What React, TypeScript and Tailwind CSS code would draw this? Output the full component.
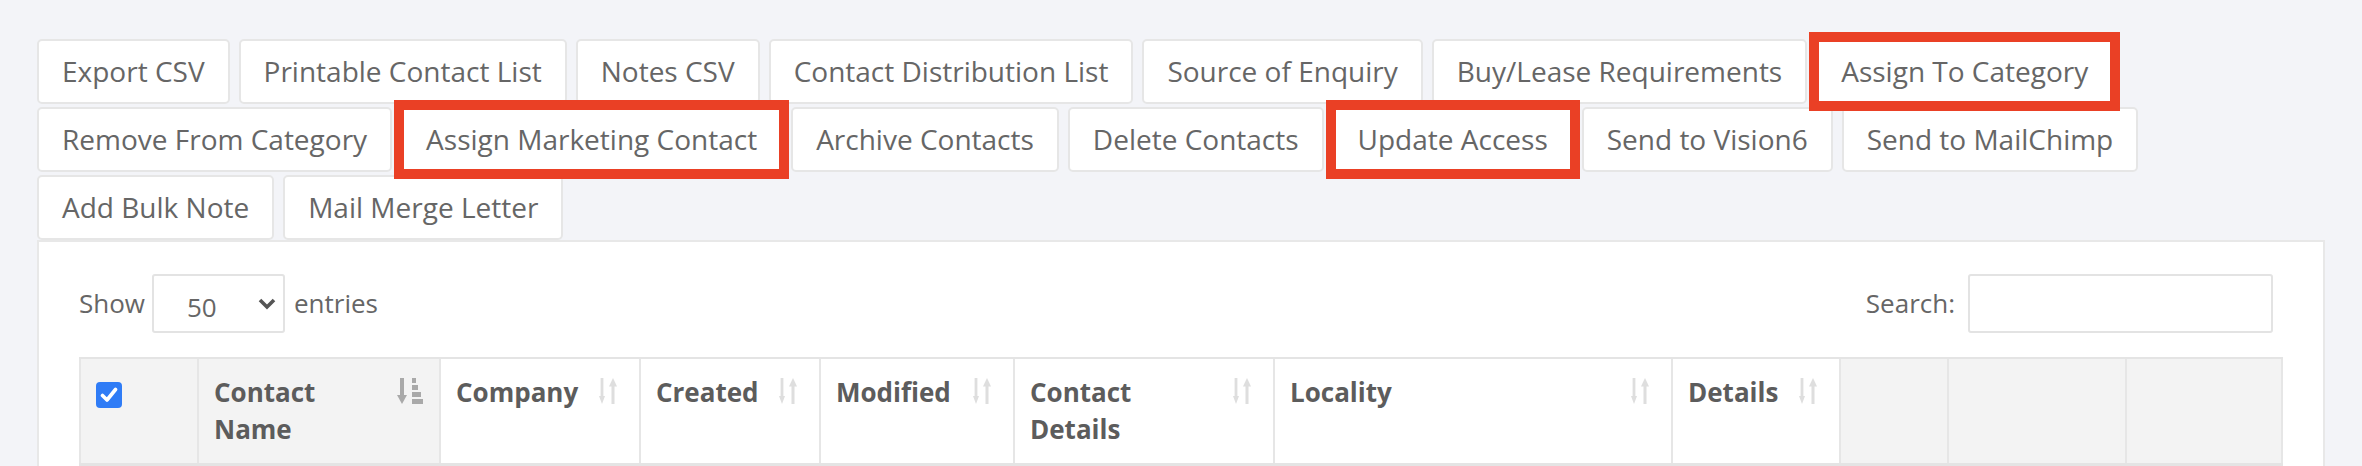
import React from "react";

function Btn({ label, red }: { label: string; red?: boolean }) {
  return (
    <div className="relative h-[65px] shrink-0 whitespace-nowrap rounded-[5px] border-2 border-[#e6e6e6] bg-white px-[23px] text-[28px] leading-[61px] text-[#666]">
      {label}
      {red && (
        <div className="pointer-events-none absolute -inset-[9px] z-10 border-[10px] border-[#ea4025]" />
      )}
    </div>
  );
}

function SortIcon() {
  return (
    <svg width="24" height="26" viewBox="0 0 24 26" className="mt-[4px] shrink-0">
      <rect x="1.6" y="0" width="2.8" height="20" fill="#dedede" />
      <polygon points="0,18 6,18 3,26" fill="#dedede" />
      <rect x="12.5" y="7" width="3" height="19" fill="#dedede" />
      <polygon points="10,8.5 18,8.5 14,0" fill="#dedede" />
    </svg>
  );
}

function SortedIcon() {
  return (
    <svg width="26" height="26" viewBox="0 0 26 26" className="mt-[4px] shrink-0">
      <rect x="3" y="0" width="4" height="19" fill="#a9a9a9" />
      <polygon points="0,17 10,17 5,26" fill="#a9a9a9" />
      <rect x="15" y="0" width="4" height="5" fill="#a9a9a9" />
      <rect x="15" y="7" width="6" height="5" fill="#a9a9a9" />
      <rect x="15" y="14" width="9" height="5" fill="#a9a9a9" />
      <rect x="15" y="21" width="11" height="5" fill="#a9a9a9" />
    </svg>
  );
}

type Col = { lines?: string[]; sort?: "none" | "sorted"; gray?: boolean; check?: boolean };

const cols: Col[] = [
  { check: true, gray: true },
  { lines: ["Contact", "Name"], sort: "sorted", gray: true },
  { lines: ["Company"], sort: "none" },
  { lines: ["Created"], sort: "none" },
  { lines: ["Modified"], sort: "none" },
  { lines: ["Contact", "Details"], sort: "none" },
  { lines: ["Locality"], sort: "none" },
  { lines: ["Details"], sort: "none" },
  { gray: true },
  { gray: true },
  { gray: true },
];

export default function App() {
  const row1 = [
    "Export CSV",
    "Printable Contact List",
    "Notes CSV",
    "Contact Distribution List",
    "Source of Enquiry",
    "Buy/Lease Requirements",
  ];
  const row2a = ["Remove From Category"];
  const row2b = ["Archive Contacts", "Delete Contacts"];
  const row2c = ["Send to Vision6", "Send to MailChimp"];

  return (
    <div className="h-[466px] w-[2362px] overflow-hidden bg-[#f3f4f8] px-[37px] pt-[39px] font-['Open_Sans',sans-serif]">
      <div className="flex flex-col gap-[3px]">
        <div className="flex gap-[9px]">
          {row1.map((l) => (
            <Btn key={l} label={l} />
          ))}
          <Btn label="Assign To Category" red />
        </div>
        <div className="flex gap-[9px]">
          {row2a.map((l) => (
            <Btn key={l} label={l} />
          ))}
          <Btn label="Assign Marketing Contact" red />
          {row2b.map((l) => (
            <Btn key={l} label={l} />
          ))}
          <Btn label="Update Access" red />
          {row2c.map((l) => (
            <Btn key={l} label={l} />
          ))}
        </div>
        <div className="flex gap-[9px]">
          <Btn label="Add Bulk Note" />
          <Btn label="Mail Merge Letter" />
        </div>
      </div>

      <div className="border-2 border-[#e8e8e8] bg-white px-[40px] pt-[32px]">
        <div className="flex h-[59px] items-center justify-between text-[26px] text-[#666]">
          <div className="flex items-center">
            <span>Show</span>
            <div className="ml-[7px] mr-[9px] flex h-[59px] w-[133px] items-center justify-between rounded-[3px] border-2 border-[#e3e3e3] bg-white pl-[33px] pr-[7px]">
              <span className="mt-[6px] leading-none">50</span>
              <svg width="18" height="12" viewBox="0 0 18 12">
                <polyline points="2,2 9,9 16,2" fill="none" stroke="#555" strokeWidth="3.6" />
              </svg>
            </div>
            <span>entries</span>
          </div>
          <div className="mr-[10px] flex items-center">
            <span>Search:</span>
            <div className="ml-[13px] h-[59px] w-[305px] rounded-[3px] border-2 border-[#e3e3e3] bg-white" />
          </div>
        </div>

        <div className="mt-[24px] grid grid-cols-[118px_242px_200px_180px_194px_260px_398px_168px_108px_178px_158px] border-b-[3px] border-t-2 border-[#e4e4e4]">
          {cols.map((c, i) => (
            <div
              key={i}
              className={`flex h-[104px] items-start justify-between border-l-2 border-[#e6e6e6] pb-[15px] pl-[15px] pr-[16px] pt-[15px] ${
                c.gray ? "bg-[#f3f3f3]" : "bg-white"
              } ${i === cols.length - 1 ? "border-r-2" : ""}`}
            >
              {c.check && (
                <div className="mt-[8px] flex h-[26px] w-[26px] items-center justify-center rounded-[4px] bg-[#2f7cf6]">
                  <svg width="18" height="16" viewBox="0 0 18 16">
                    <polyline points="2.5,8.5 7,13 15.5,2.5" fill="none" stroke="#fff" strokeWidth="3.6" strokeLinecap="round" strokeLinejoin="round" />
                  </svg>
                </div>
              )}
              {c.lines && (
                <div className="text-[26px] font-bold leading-[37px] text-[#5c5c5c]">
                  {c.lines.map((ln) => (
                    <div key={ln}>{ln}</div>
                  ))}
                </div>
              )}
              {c.sort === "none" && <SortIcon />}
              {c.sort === "sorted" && <SortedIcon />}
            </div>
          ))}
        </div>
      </div>
    </div>
  );
}
